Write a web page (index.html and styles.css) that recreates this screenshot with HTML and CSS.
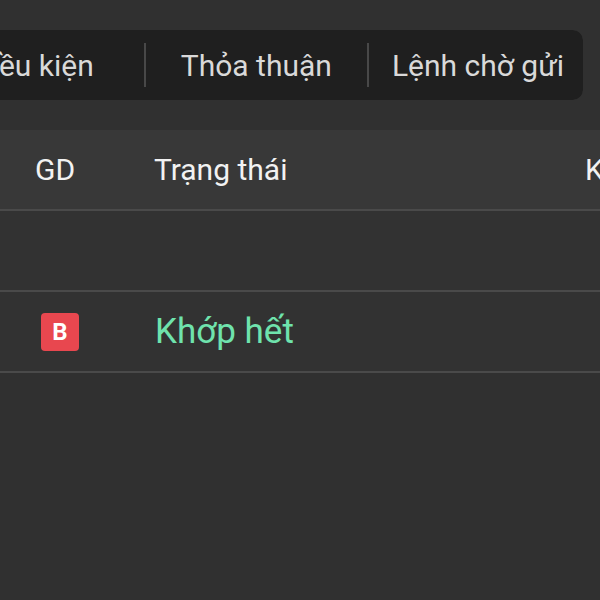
FILE: index.html
```html
<!DOCTYPE html>
<html lang="vi">
  <head>
    <meta charset="UTF-8" />
    <meta name="viewport" content="width=device-width, initial-scale=1.0" />
    <title>Sổ lệnh</title>
    <link rel="stylesheet" href="styles.css">
  </head>
  <body>
    <div class="page">
      <div class="tabs-wrap">
        <div class="tabs">
          <span class="tab tab-first">Lệnh điều kiện</span>
          <span class="divider"></span>
          <span class="tab">Thỏa thuận</span>
          <span class="divider"></span>
          <span class="tab tab-last">Lệnh chờ gửi</span>
        </div>
      </div>

      <div class="table">
        <div class="row head">
          <div class="cell col-gd">GD</div>
          <div class="cell col-status">Trạng thái</div>
          <div class="cell col-next">KL</div>
        </div>
        <div class="row"></div>
        <div class="row">
          <div class="cell col-gd"><span class="badge buy">B</span></div>
          <div class="cell col-status status-done">Khớp hết</div>
          <div class="cell col-next"></div>
        </div>
      </div>
    </div>
  </body>
</html>
```

FILE: styles.css
```css
* {
  margin: 0;
  padding: 0;
  box-sizing: border-box;
}

body {
  font-family: Roboto, "Noto Sans", sans-serif;
  background-color: #303030;
  width: 600px;
  height: 600px;
  overflow: hidden;
}

.page {
  padding-top: 30px;
  height: 100%;
}

.tabs-wrap {
  width: 583px;
  overflow: hidden;
  border-radius: 0 10px 10px 0;
}

.tabs {
  display: flex;
  align-items: center;
  justify-content: flex-end;
  height: 70px;
  background-color: #1f1f1f;
  border-radius: 10px;
  width: 760px;
  margin-left: -177px;
  color: #d9d9d9;
  font-size: 30px;
  white-space: nowrap;
}

.tab {
  padding: 0 35px;
}

.tab-first {
  padding-right: 50px;
}

.tab-last {
  padding-left: 23px;
  padding-right: 19px;
}

.divider {
  width: 2px;
  height: 44px;
  background-color: #484848;
}

.table {
  margin-top: 30px;
  width: 620px;
}

.row {
  display: flex;
  align-items: center;
  height: 81px;
  border-bottom: 2px solid #4a4a4a;
  background-color: #323232;
}

.row.head {
  background-color: #383838;
  color: #f2f2f2;
  font-size: 30px;
}

.cell {
  white-space: nowrap;
}

.col-gd {
  width: 155px;
  padding-left: 35px;
}

.col-status {
  width: 435px;
}

.col-next {
  flex: 1;
}

.badge {
  display: inline-flex;
  align-items: center;
  justify-content: center;
  width: 38px;
  height: 38px;
  margin-left: 6px;
  border-radius: 4px;
  color: #ffffff;
  font-size: 24px;
  font-weight: bold;
}

.buy {
  background-color: #e8474f;
}

.status-done {
  color: #6fe3ad;
  font-size: 35px;
}
```
